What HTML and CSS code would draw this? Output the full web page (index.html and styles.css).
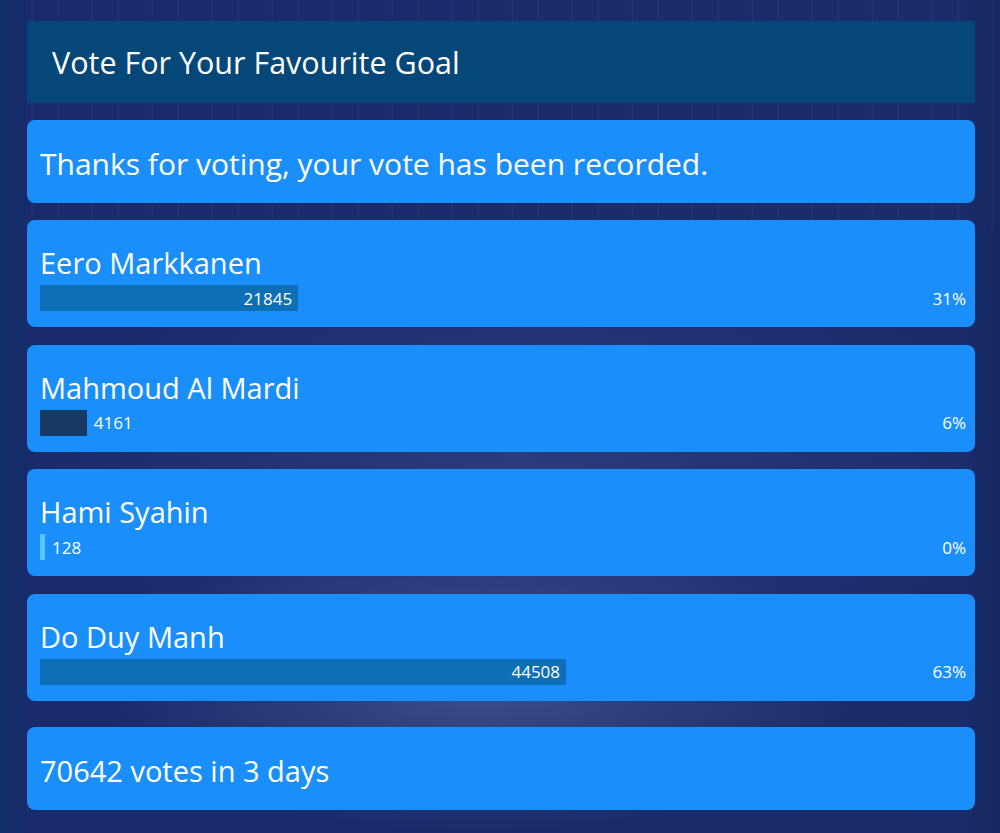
FILE: index.html
```html
<!DOCTYPE html>
<html lang="en">

<head>
    <meta charset="UTF-8">
    <meta name="viewport" content="width=device-width, initial-scale=1.0">
    <title>Vote For Your Favourite Goal</title>
    <link rel="stylesheet" href="styles.css">
</head>

<body>
    <div class="poll">
        <div class="poll-header">Vote For Your Favourite Goal</div>

        <div class="card message">Thanks for voting, your vote has been recorded.</div>

        <div class="card option">
            <div class="option-name">Eero Markkanen</div>
            <div class="result">
                <div class="track">
                    <div class="bar" style="width: 30.92%">21845</div>
                </div>
                <div class="percent">31%</div>
            </div>
        </div>

        <div class="card option">
            <div class="option-name">Mahmoud Al Mardi</div>
            <div class="result">
                <div class="track">
                    <div class="bar bar-dark" style="width: 5.6%"></div>
                    <span class="count">4161</span>
                </div>
                <div class="percent">6%</div>
            </div>
        </div>

        <div class="card option">
            <div class="option-name">Hami Syahin</div>
            <div class="result">
                <div class="track">
                    <div class="bar bar-light" style="width: 0.6%"></div>
                    <span class="count">128</span>
                </div>
                <div class="percent">0%</div>
            </div>
        </div>

        <div class="card option">
            <div class="option-name">Do Duy Manh</div>
            <div class="result">
                <div class="track">
                    <div class="bar" style="width: 63.0%">44508</div>
                </div>
                <div class="percent">63%</div>
            </div>
        </div>

        <div class="card message total">70642 votes in 3 days</div>
    </div>
</body>

</html>
```

FILE: styles.css
```css
body {
    margin: 0;
    min-height: 833px;
    font-family: 'Open Sans', 'Noto Sans', sans-serif;
    color: #fff;
    background-color: #1a2b69;
    background-image:
        repeating-linear-gradient(90deg, rgba(140, 170, 230, 0) 0px, rgba(140, 170, 230, 0) 31px, rgba(150, 180, 240, 0.07) 32px, rgba(140, 170, 230, 0) 34px, rgba(140, 170, 230, 0) 57px, rgba(170, 200, 250, 0.06) 58px, rgba(140, 170, 230, 0) 60px),
        radial-gradient(ellipse 380px 150px at 48% 82%, rgba(110, 130, 190, 0.4), rgba(110, 130, 190, 0)),
        radial-gradient(ellipse 480px 240px at 52% 56%, rgba(80, 100, 170, 0.3), rgba(80, 100, 170, 0)),
        linear-gradient(90deg, #10306a 0%, #1a2a6a 4%, #1b2c6b 96%, #15275f 100%);
    background-size: 100% 230px, auto, auto, auto;
    background-repeat: no-repeat;
}

.poll {
    padding: 21px 25px 23px 27px;
    display: flex;
    flex-direction: column;
}

.poll-header {
    height: 82px;
    display: flex;
    align-items: center;
    padding: 0 25px;
    background: #06477a;
    font-size: 30.5px;
    margin-bottom: 17px;
}

.card {
    background: #1a8ffb;
    border-radius: 8px;
    padding: 0 9px 0 13px;
}

.message {
    height: 83px;
    display: flex;
    align-items: center;
    font-size: 30px;
    padding-top: 4px;
    box-sizing: border-box;
    margin-bottom: 17px;
}

.total {
    margin-top: 9px;
    margin-bottom: 0;
    font-size: 29px;
}

.option {
    height: 107px;
    box-sizing: border-box;
    padding-top: 26px;
    margin-bottom: 17.6px;
}

.option-name {
    font-size: 29px;
    line-height: 34px;
    margin-bottom: 5px;
}

.result {
    display: flex;
    align-items: center;
    height: 26px;
    font-size: 17px;
}

.track {
    width: 835px;
    height: 26px;
    display: flex;
    align-items: center;
}

.bar {
    height: 26px;
    box-sizing: border-box;
    min-width: 4px;
    background: #0e6eb6;
    display: flex;
    align-items: center;
    justify-content: flex-end;
    padding-right: 6px;
    white-space: nowrap;
}

.bar-dark {
    background: #173a64;
    padding: 0;
}

.bar-light {
    background: #55c4ff;
    padding: 0;
}

.count {
    margin-left: 7px;
}

.percent {
    flex: 1;
    text-align: right;
}
```
